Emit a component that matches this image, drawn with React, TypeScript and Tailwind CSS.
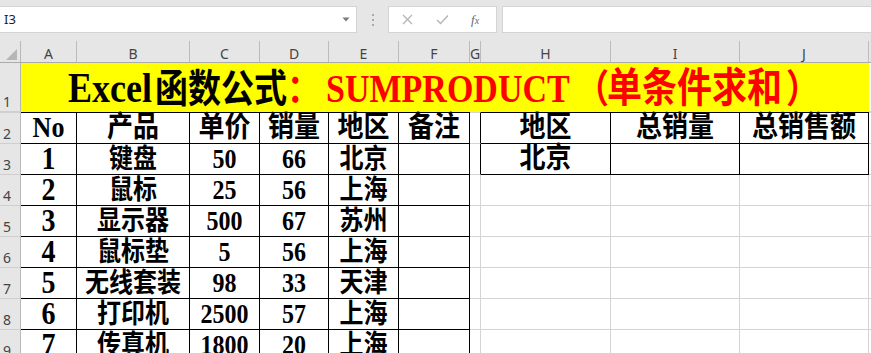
import React from "react";

const FONT = '"Liberation Serif", "Noto Sans CJK SC", serif';
const UI = '"Noto Sans", "Open Sans", sans-serif';

const W = [56, 113, 70, 69, 70, 71, 11, 130, 129, 129];
const LETTERS = ["A", "B", "C", "D", "E", "F", "G", "H", "I", "J"];

const rows: [string, string, string, string, string][] = [
  ["1", "键盘", "50", "66", "北京"],
  ["2", "鼠标", "25", "56", "上海"],
  ["3", "显示器", "500", "67", "苏州"],
  ["4", "鼠标垫", "5", "56", "上海"],
  ["5", "无线套装", "98", "33", "天津"],
  ["6", "打印机", "2500", "57", "上海"],
  ["7", "传真机", "1800", "20", "上海"],
];

function T({ children, size, scale = "scale-y-[1.12]" }: { children: React.ReactNode; size: string; scale?: string }) {
  return (
    <span
      className={`inline-block whitespace-nowrap font-bold leading-none ${scale} ${size}`}
      style={{ fontFamily: FONT }}
    >
      {children}
    </span>
  );
}

function RowHead({ n, h, top }: { n: string; h: string; top?: boolean }) {
  return (
    <div
      className={`${h} w-[21px] shrink-0 bg-[#e6e6e6] border-r border-r-[#b8b8b8] border-b border-b-[#cfcfcf] ${top ? "border-t border-t-[#cfcfcf]" : ""} flex items-end pl-[3px] pb-[1px] text-[14px] leading-[16px] text-[#444]`}
      style={{ fontFamily: UI }}
    >
      {n}
    </div>
  );
}

export default function App() {
  return (
    <div className="w-[871px] h-[353px] overflow-hidden bg-white">
      {/* formula bar */}
      <div className="h-[41px] bg-[#e6e6e6] flex items-start pt-[6px]">
        <div className="w-[357px] h-[27px] bg-white border border-[#d4d4d4] border-l-0 flex items-center justify-between pl-[4px] pr-[6px]">
          <span className="text-[13px] text-[#222]" style={{ fontFamily: UI }}>I3</span>
          <svg width="8" height="5" viewBox="0 0 8 5"><path d="M0.5 0.5 L7.5 0.5 L4 4.5 Z" fill="#7a7a7a" /></svg>
        </div>
        <div className="w-[31px] h-[27px] flex flex-col items-center justify-center gap-[3px]">
          <div className="w-[2px] h-[2px] bg-[#a8a8a8]" />
          <div className="w-[2px] h-[2px] bg-[#a8a8a8]" />
          <div className="w-[2px] h-[2px] bg-[#a8a8a8]" />
        </div>
        <div className="w-[109px] h-[27px] bg-white border border-[#d4d4d4] flex items-center">
          <svg className="ml-[13px]" width="11" height="11" viewBox="0 0 11 11"><path d="M1 1 L10 10 M10 1 L1 10" stroke="#b4b4b4" strokeWidth="1.3" /></svg>
          <svg className="ml-[23px]" width="13" height="11" viewBox="0 0 13 11"><path d="M1 6 L4.5 9.5 L12 1.5" stroke="#b4b4b4" strokeWidth="1.4" fill="none" /></svg>
          <span className="ml-[22px] text-[13px] italic text-[#6a6a6a]" style={{ fontFamily: '"Liberation Serif", serif' }}>
            f<span className="text-[10px]">x</span>
          </span>
        </div>
        <div className="ml-[5px] flex-1 h-[27px] bg-white border border-[#d4d4d4] border-r-0" />
      </div>

      {/* column headers */}
      <div className="flex h-[22px] bg-[#e6e6e6] border-b border-b-[#ababab]">
        <div className="w-[21px] shrink-0 border-r border-r-[#b8b8b8] flex items-end justify-end pr-[3px] pb-[2px]">
          <svg width="11" height="11" viewBox="0 0 11 11"><path d="M11 0 L11 11 L0 11 Z" fill="#b6b6b6" /></svg>
        </div>
        {W.map((w, i) => (
          <div
            key={i}
            className="shrink-0 border-r border-r-[#bcbcbc] flex items-center justify-center pt-[3px] text-[14px] text-[#444]"
            style={{ width: w, fontFamily: UI }}
          >
            {LETTERS[i]}
          </div>
        ))}
        <div className="flex-1" />
      </div>

      {/* row 1 */}
      <div className="flex h-[49px]">
        <RowHead n="1" h="h-[49px]" />
        <div className="w-[848px] shrink-0 bg-[#ffff00] flex items-center justify-start pl-[47px]">
          <span
            className="inline-flex items-baseline whitespace-nowrap font-bold leading-none scale-y-[1.18]"
            style={{ fontFamily: FONT }}
          >
            <span className="text-black text-[36px] inline-block w-[87px] text-left">Excel</span>
            <span className="text-black text-[33px] inline-block w-[132px] text-left">函数公式</span>
            <span className="text-[#ff0000] text-[33px] inline-block w-[39px] text-left">：</span>
            <span className="text-[#ff0000] text-[34px] inline-block w-[250px] text-left">SUMPRODUCT</span>
            <span className="text-[#ff0000] text-[33px] inline-block w-[31px] text-right">（</span>
            <span className="text-[#ff0000] text-[35px] inline-block w-[175px] text-left">单条件求和</span>
            <span className="text-[#ff0000] text-[33px] inline-block w-[33px] text-left pl-[4px]">）</span>
          </span>
        </div>
        <div className="flex-1 border-b border-b-[#d4d4d4]" />
      </div>

      {/* row 2 */}
      <div className="flex h-[32px]">
        <RowHead n="2" h="h-[32px]" top />
        {["No", "产品", "单价", "销量", "地区", "备注"].map((t, i) => (
          <div
            key={i}
            className="shrink-0 border-t border-b border-r border-black flex items-center justify-center"
            style={{ width: W[i] }}
          >
            <T size="text-[26px]">{t}</T>
          </div>
        ))}
        <div className="shrink-0 border-t border-b border-t-[#d4d4d4] border-b-[#d4d4d4] border-r border-r-black" style={{ width: W[6] }} />
        {["地区", "总销量", "总销售额"].map((t, i) => (
          <div
            key={i}
            className="shrink-0 border-t border-b border-r border-black flex items-center justify-center"
            style={{ width: W[7 + i] }}
          >
            <T size="text-[26px]">{t}</T>
          </div>
        ))}
        <div className="flex-1 border-t border-b border-[#d4d4d4]" />
      </div>

      {/* data rows */}
      {rows.map((r, ri) => (
        <div key={ri} className="flex h-[31px]">
          <RowHead n={String(ri + 3)} h="h-[31px]" />
          {r.map((t, i) => (
            <div
              key={i}
              className="shrink-0 border-b border-r border-black flex items-center justify-center"
              style={{ width: W[i] }}
            >
              <T size={i === 0 ? "text-[28px]" : "text-[24px]"}>{t}</T>
            </div>
          ))}
          <div className="shrink-0 border-b border-r border-black" style={{ width: W[5] }} />
          <div
            className={`shrink-0 border-b border-b-[#d4d4d4] border-r ${ri === 0 ? "border-r-black" : "border-r-[#d4d4d4]"}`}
            style={{ width: W[6] }}
          />
          {[0, 1, 2].map((k) => (
            <div
              key={k}
              className={`shrink-0 border-b border-r flex items-center justify-center ${ri === 0 ? "border-black" : "border-[#d4d4d4]"}`}
              style={{ width: W[7 + k] }}
            >
              {ri === 0 && k === 0 ? <T size="text-[26px]">北京</T> : null}
            </div>
          ))}
          <div className="flex-1 border-b border-[#d4d4d4]" />
        </div>
      ))}
    </div>
  );
}
